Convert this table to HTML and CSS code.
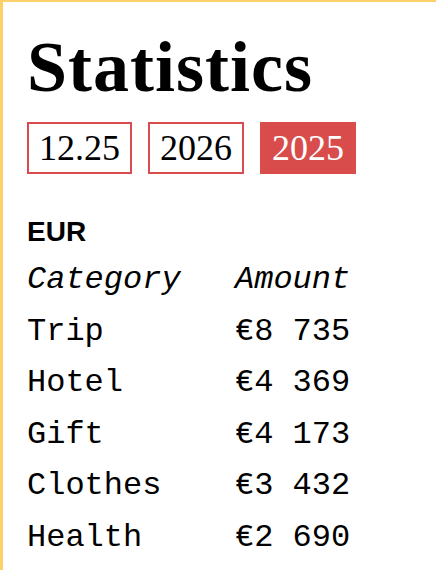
FILE: index.html
```html
<!DOCTYPE html>
<html lang="en">
<head>
<meta charset="utf-8">
<title>Statistics</title>
<link rel="stylesheet" href="styles.css">
</head>
<body>
<main class="panel">
  <h1 class="title">Statistics</h1>
  <div class="filters">
    <button class="chip">12.25</button>
    <button class="chip">2026</button>
    <button class="chip chip-active">2025</button>
  </div>
  <h2 class="currency">EUR</h2>
  <div class="table">
    <div class="row head"><span>Category</span><span>Amount</span></div>
    <div class="row"><span>Trip</span><span>€8 735</span></div>
    <div class="row"><span>Hotel</span><span>€4 369</span></div>
    <div class="row"><span>Gift</span><span>€4 173</span></div>
    <div class="row"><span>Clothes</span><span>€3 432</span></div>
    <div class="row"><span>Health</span><span>€2 690</span></div>
  </div>
</main>
</body>
</html>
```
FILE: styles.css
```css
html, body {
  margin: 0;
  padding: 0;
  background: #fff;
}
.panel {
  box-sizing: border-box;
  width: 436px;
  min-height: 570px;
  border-left: 3px solid #fdd06b;
  border-top: 2px solid #fdd06b;
  padding: 29px 0 0 24px;
  color: #000;
}
.title {
  margin: 0;
  font-family: "Liberation Serif", serif;
  font-weight: 700;
  font-size: 72px;
  line-height: 72px;
  letter-spacing: 1px;
}
.filters {
  display: flex;
  gap: 16px;
  margin-top: 19px;
}
.chip {
  margin: 0;
  border: 2px solid #d94c4c;
  background: #fff;
  color: #000;
  font-family: "Liberation Serif", serif;
  font-size: 36px;
  line-height: 44px;
  padding: 2px 10px;
  border-radius: 0;
}
.chip-active {
  background: #d94c4c;
  color: #fff;
}
.currency {
  margin: 42px 0 0;
  font-family: "Liberation Sans", sans-serif;
  font-weight: 700;
  font-size: 28px;
  line-height: 32px;
}
.table {
  margin-top: 6px;
  font-family: "Liberation Mono", monospace;
  font-size: 32px;
}
.row {
  display: grid;
  grid-template-columns: 208px auto;
  line-height: 51.5px;
  white-space: pre;
}
.row.head {
  font-style: italic;
}
```
